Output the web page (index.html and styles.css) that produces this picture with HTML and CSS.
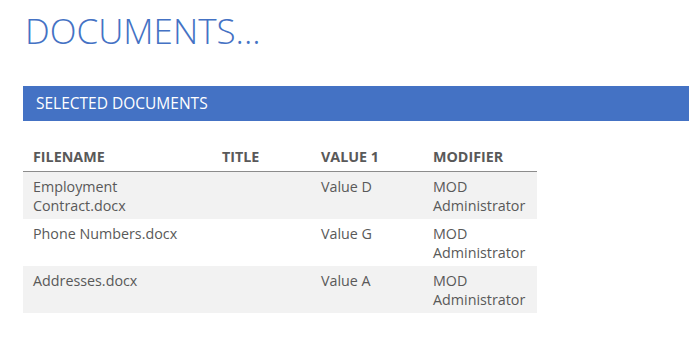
FILE: index.html
```html
<!DOCTYPE html>
<html>
<head>
<meta charset="utf-8">
<link rel="stylesheet" href="styles.css">
</head>
<body>
<div class="page">
  <h1 class="title">DOCUMENTS...</h1>
  <div class="bar">SELECTED DOCUMENTS</div>
  <table class="docs">
    <colgroup>
      <col class="c1"><col class="c2"><col class="c3"><col class="c4">
    </colgroup>
    <thead>
      <tr><th>FILENAME</th><th>TITLE</th><th>VALUE 1</th><th>MODIFIER</th></tr>
    </thead>
    <tbody>
      <tr class="alt"><td>Employment Contract.docx</td><td></td><td>Value D</td><td>MOD Administrator</td></tr>
      <tr><td>Phone Numbers.docx</td><td></td><td>Value G</td><td>MOD Administrator</td></tr>
      <tr class="alt"><td>Addresses.docx</td><td></td><td>Value A</td><td>MOD Administrator</td></tr>
    </tbody>
  </table>
</div>
</body>
</html>
```
FILE: styles.css
```css
html, body { margin: 0; padding: 0; background: #fff; }
body { font-family: "Open Sans", "Noto Sans", sans-serif; color: #595959; }
.page { padding: 7px 0 0 23px; }
.title {
  margin: 0;
  padding-left: 2px;
  font-weight: 300;
  font-size: 35px;
  line-height: 48px;
  color: #4472c4;
}
.bar {
  margin-top: 31px;
  height: 35px;
  background: #4472c4;
  color: #fff;
  font-size: 15.5px;
  line-height: 35px;
  padding-left: 13px;
}
.docs {
  margin-top: 26px;
  width: 514px;
  border-collapse: collapse;
  table-layout: fixed;
  font-size: 14.3px;
}
.c1 { width: 189px; }
.c2 { width: 99px; }
.c3 { width: 112px; }
.c4 { width: 114px; }
.docs th {
  text-align: left;
  font-weight: 700;
  color: #595959;
  padding: 0 10px 4px 10px;
  line-height: 20px;
  border-bottom: 1px solid #8c8c8c;
}
.docs td {
  vertical-align: top;
  padding: 5px 10px 4px 10px;
  line-height: 19px;
}
.docs tr.alt td { background: #f2f2f2; }
```
